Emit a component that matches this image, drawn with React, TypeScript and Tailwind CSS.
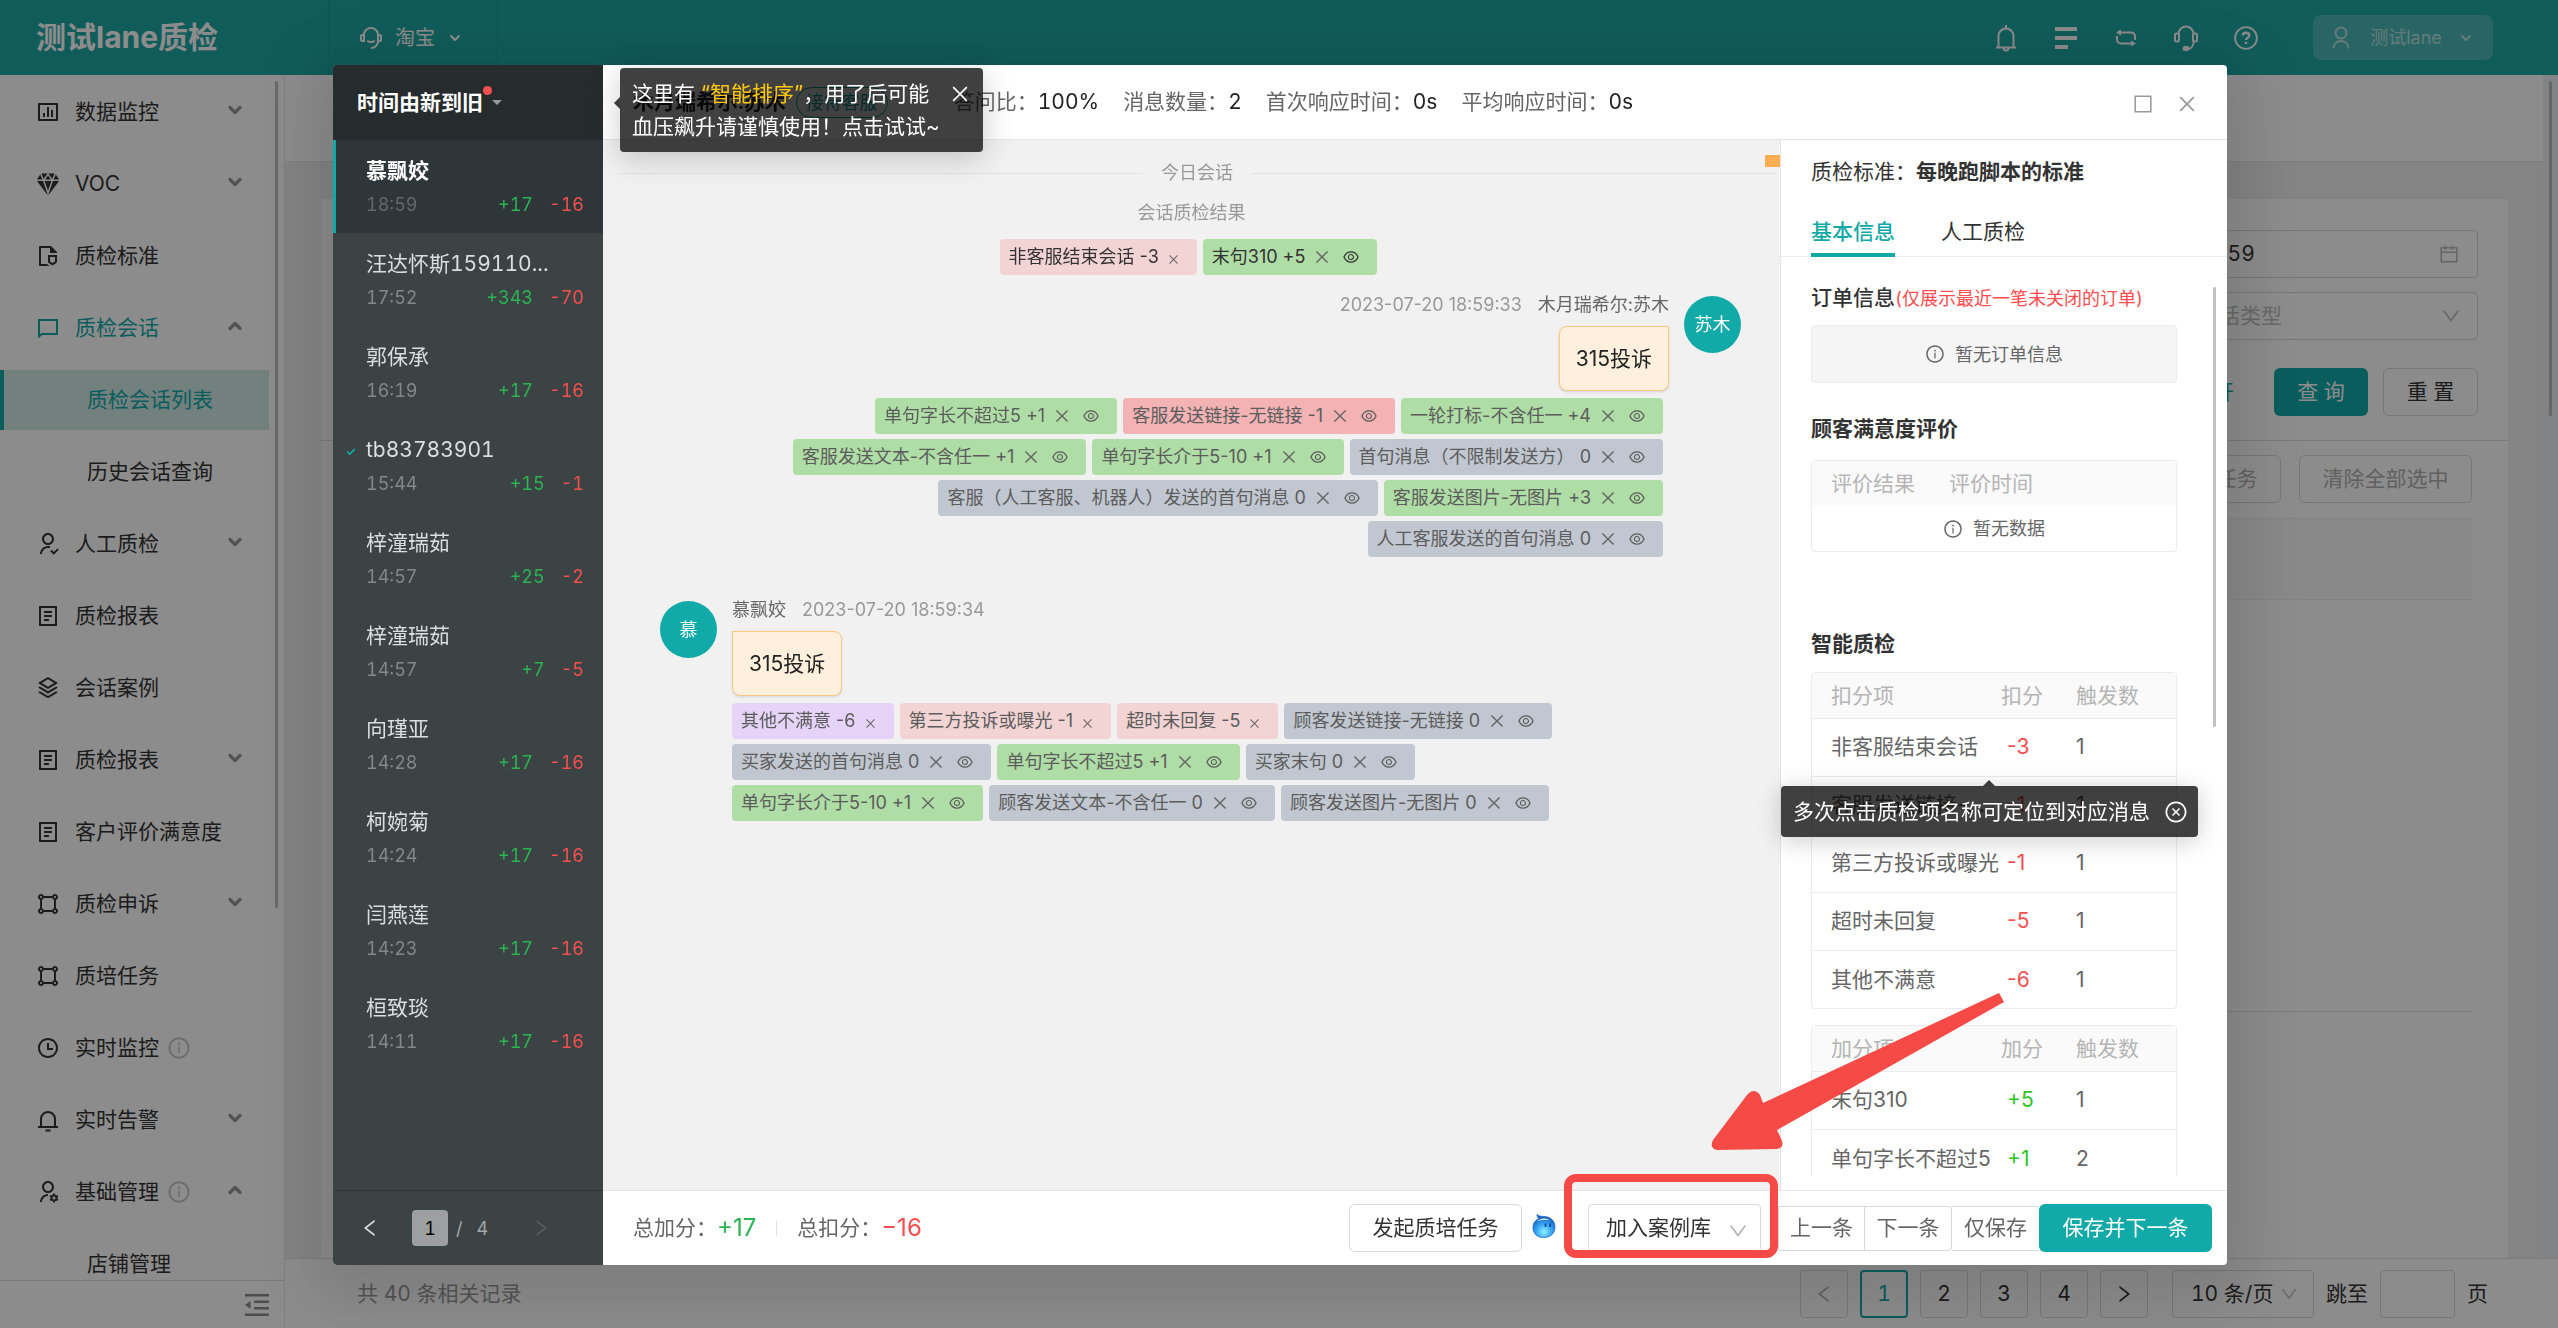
import { useState } from "react";
import type { ReactNode } from "react";
import {
  AiOutlineBorder,
  AiOutlineCalendar,
  AiOutlineClose,
  AiOutlineCloseCircle,
  AiOutlineDown,
  AiOutlineEye,
  AiOutlineInfoCircle,
  AiOutlineLeft,
  AiOutlineRight,
} from "react-icons/ai";
import { IoDiamond } from "react-icons/io5";
import {
  RiBarChartBoxLine,
  RiCustomerService2Line,
  RiFileShield2Line,
  RiShapeLine,
  RiStackLine,
  RiTimeLine,
  RiUserFollowLine,
  RiUserSettingsLine,
} from "react-icons/ri";
import { Check, ChevronDown, ChevronUp } from "lucide-react";

type MenuItem = {
  label: string;
  icon?: ReactNode;
  arrow?: "up" | "down";
  info?: boolean;
  open?: boolean;
  active?: boolean;
};

type Session = {
  name: string;
  time: string;
  plus: string;
  minus: string;
  checked?: boolean;
};

type TagTone = "green" | "pink" | "red" | "gray" | "purple";
type TagData = { text: string; tone: TagTone; simple?: boolean };

/* ---------- drawn icons ---------- */

const MessageIcon = () => (
  <svg viewBox="0 0 24 24" className="size-6" fill="currentColor">
    <path d="M6.4 19 2 22.5V3h20v16H6.4Zm-.7-2H20V5H4v13.4L5.700 17Z" />
  </svg>
);

const ReportIcon = () => (
  <svg viewBox="0 0 24 24" className="size-6" fill="none" stroke="currentColor" strokeWidth="2">
    <path d="M4 3h16v18H4zM8 8h8M8 12h8M8 16h5" />
  </svg>
);

const BellIcon = () => (
  <svg viewBox="0 0 24 24" className="size-6" fill="none" stroke="currentColor" strokeWidth="2">
    <path d="M5 19v-8a7 7 0 0 1 14 0v8M2 19h20M9.500 22.500h5" />
  </svg>
);

const TopBellIcon = () => (
  <svg viewBox="0 0 24 28" className="h-7 w-6" fill="none" stroke="currentColor" strokeWidth="2">
    <path d="M12 1v3M4.500 23V12a7.500 7.500 0 0 1 15 0v11M2 23.500h20M9.500 24a2.500 2.500 0 0 0 5 0" />
  </svg>
);

const TopListIcon = () => (
  <svg viewBox="0 0 22 22" className="size-[22px]" fill="currentColor">
    <path d="M0 0h22v4H0zM0 9h22v4H0zM0 18h13v4H0z" />
  </svg>
);

const TopSwapIcon = () => (
  <svg viewBox="0 0 22 18" className="h-[18px] w-[22px]" fill="none" stroke="currentColor" strokeWidth="2">
    <path d="M4 3.500h12a4 4 0 0 1 4 4V11M18 14.500H6a4 4 0 0 1-4-4V7" />
    <path d="M1 3.500 6 .500v6zM21 14.500l-5-3v6z" fill="currentColor" stroke="none" />
  </svg>
);

const TopHeadsetIcon = () => (
  <svg viewBox="0 0 24 26" className="h-[26px] w-6" fill="none" stroke="currentColor" strokeWidth="2">
    <path d="M4.500 9a7.500 7.500 0 0 1 15 0M19.500 17c0 4-2.500 7-6.500 7" />
    <rect x="1" y="8.500" width="4" height="8" rx="1.500" />
    <rect x="19" y="8.500" width="4" height="8" rx="1.500" />
    <rect x="9.500" y="22" width="5" height="3" rx="1.500" fill="currentColor" />
  </svg>
);

const TopHelpIcon = () => (
  <svg viewBox="0 0 26 26" className="size-[26px]" fill="none" stroke="currentColor">
    <circle cx="13" cy="13" r="11.800" strokeWidth="2" />
    <path d="M9.500 10.300c0-4 7-4 7 0 0 2.300-3.500 2.400-3.500 5" strokeWidth="2.500" />
    <path d="M13 17v2.500" strokeWidth="2.800" />
  </svg>
);

const TopUserIcon = () => (
  <svg viewBox="0 0 18 24" className="h-6 w-[18px]" fill="none" stroke="currentColor" strokeWidth="2">
    <circle cx="9" cy="7" r="5.500" />
    <path d="M1.500 22.500c0-10 15-10 15 0" />
  </svg>
);

const CollapseIcon = () => (
  <svg viewBox="0 0 24 22" className="h-[22px] w-6" fill="currentColor">
    <path d="M0 0h24v2.500H0zM9 6.500h15V9H9zM9 13h15v2.500H9zM0 19.500h24V22H0zM0 11l5.500-4v8z" />
  </svg>
);

const DropletFace = () => (
  <svg viewBox="0 0 24 24" className="size-6 shrink-0">
    <defs>
      <radialGradient id="drop" cx="50%" cy="75%" r="65%">
        <stop offset="0" stopColor="#8df0ff" />
        <stop offset=".55" stopColor="#35a4f5" />
        <stop offset="1" stopColor="#1560c4" />
      </radialGradient>
    </defs>
    <path d="M5 .500c1.500 1.500 4 2 7 2 6 0 11 4 11 10.500s-4.500 10.500-11.500 10.500S1 19 1 13.500C1 9 3.500 6 7 4.500 5.500 3.500 4.800 2 5 .500Z" fill="url(#drop)" stroke="#2767b8" strokeWidth=".8" />
    <path d="M5 7.500C8 3.800 15 3.500 18 6.500c-5-.800-9-.500-13 1Z" fill="#d5e8fb" />
    <path d="M13.500 9.500v3.500M18 9.500v3.500" stroke="#0d3f94" strokeWidth="1.600" />
  </svg>
);

/* ---------- data ---------- */

const menu: MenuItem[] = [
  { label: "数据监控", icon: <RiBarChartBoxLine className="size-6" />, arrow: "down" },
  { label: "VOC", icon: <IoDiamond className="size-6" />, arrow: "down" },
  { label: "质检标准", icon: <RiFileShield2Line className="size-6" /> },
  { label: "质检会话", icon: <MessageIcon />, arrow: "up", open: true },
  { label: "质检会话列表", active: true },
  { label: "历史会话查询" },
  { label: "人工质检", icon: <RiUserFollowLine className="size-6" />, arrow: "down" },
  { label: "质检报表", icon: <ReportIcon /> },
  { label: "会话案例", icon: <RiStackLine className="size-6" /> },
  { label: "质检报表", icon: <ReportIcon />, arrow: "down" },
  { label: "客户评价满意度", icon: <ReportIcon /> },
  { label: "质检申诉", icon: <RiShapeLine className="size-6" />, arrow: "down" },
  { label: "质培任务", icon: <RiShapeLine className="size-6" /> },
  { label: "实时监控", icon: <RiTimeLine className="size-6" />, info: true },
  { label: "实时告警", icon: <BellIcon />, arrow: "down" },
  { label: "基础管理", icon: <RiUserSettingsLine className="size-6" />, arrow: "up", info: true },
  { label: "店铺管理" },
];

const sessions: Session[] = [
  { name: "慕飘姣", time: "18:59", plus: "+17", minus: "-16" },
  { name: "汪达怀斯159110...", time: "17:52", plus: "+343", minus: "-70" },
  { name: "郭保承", time: "16:19", plus: "+17", minus: "-16" },
  { name: "tb83783901", time: "15:44", plus: "+15", minus: "-1", checked: true },
  { name: "梓潼瑞茹", time: "14:57", plus: "+25", minus: "-2" },
  { name: "梓潼瑞茹", time: "14:57", plus: "+7", minus: "-5" },
  { name: "向瑾亚", time: "14:28", plus: "+17", minus: "-16" },
  { name: "柯婉菊", time: "14:24", plus: "+17", minus: "-16" },
  { name: "闫燕莲", time: "14:23", plus: "+17", minus: "-16" },
  { name: "桓致琰", time: "14:11", plus: "+17", minus: "-16" },
];

const agentTags: TagData[][] = [
  [
    { text: "单句字长不超过5 +1", tone: "green" },
    { text: "客服发送链接-无链接 -1", tone: "red" },
    { text: "一轮打标-不含任一 +4", tone: "green" },
  ],
  [
    { text: "客服发送文本-不含任一 +1", tone: "green" },
    { text: "单句字长介于5-10 +1", tone: "green" },
    { text: "首句消息（不限制发送方） 0", tone: "gray" },
  ],
  [
    { text: "客服（人工客服、机器人）发送的首句消息 0", tone: "gray" },
    { text: "客服发送图片-无图片 +3", tone: "green" },
  ],
  [{ text: "人工客服发送的首句消息 0", tone: "gray" }],
];

const buyerTags: TagData[][] = [
  [
    { text: "其他不满意 -6", tone: "purple", simple: true },
    { text: "第三方投诉或曝光 -1", tone: "pink", simple: true },
    { text: "超时未回复 -5", tone: "pink", simple: true },
    { text: "顾客发送链接-无链接 0", tone: "gray" },
  ],
  [
    { text: "买家发送的首句消息 0", tone: "gray" },
    { text: "单句字长不超过5 +1", tone: "green" },
    { text: "买家末句 0", tone: "gray" },
  ],
  [
    { text: "单句字长介于5-10 +1", tone: "green" },
    { text: "顾客发送文本-不含任一 0", tone: "gray" },
    { text: "顾客发送图片-无图片 0", tone: "gray" },
  ],
];

const minusRows = [
  ["非客服结束会话", "-3", "1"],
  ["客服发送链接-...", "-1", "1"],
  ["第三方投诉或曝光", "-1", "1"],
  ["超时未回复", "-5", "1"],
  ["其他不满意", "-6", "1"],
];

const plusRows = [
  ["末句310", "+5", "1"],
  ["单句字长不超过5", "+1", "2"],
];

const toneClass: Record<TagTone, string> = {
  green: "bg-[#afdda6]",
  pink: "bg-[#f3d4d4]",
  red: "bg-[#f3b3b5]",
  gray: "bg-[#c1c7d0]",
  purple: "bg-[#e5d4f8]",
};

/* ---------- page behind the dialog ---------- */

function TopBar() {
  return (
    <header className="flex h-[75px] shrink-0 items-center bg-[#1ea8a4] text-white">
      <div className="flex h-full w-[328px] items-center pl-9 text-[30px] font-bold">测试lane质检</div>
      <button className="flex h-full w-[170px] items-center justify-center gap-3 border-x border-[#1a9f9b] pr-1 text-[20px]">
        <RiCustomerService2Line className="size-6" />
        淘宝
        <ChevronDown className="size-4" strokeWidth={3} />
      </button>
      <div className="ml-auto flex items-center gap-9 pr-[65px]">
        <button aria-label="通知" className="flex w-6 justify-center"><TopBellIcon /></button>
        <button aria-label="列表" className="flex w-6 justify-center"><TopListIcon /></button>
        <button aria-label="切换" className="flex w-6 justify-center"><TopSwapIcon /></button>
        <button aria-label="客服" className="flex w-6 justify-center"><TopHeadsetIcon /></button>
        <button aria-label="帮助" className="flex w-6 justify-center"><TopHelpIcon /></button>
        <button className="ml-[19px] flex h-[45px] w-[180px] items-center justify-center rounded-lg bg-white/20 text-[18px] text-white/60">
          <TopUserIcon />
          <span className="mr-4 ml-5">测试lane</span>
          <ChevronDown className="size-4" strokeWidth={3} />
        </button>
      </div>
    </header>
  );
}

function SideNav() {
  return (
    <aside className="flex w-[285px] shrink-0 flex-col border-r border-[#e8e8e8] bg-white">
      <div className="flex min-h-0 flex-1">
        <nav className="flex min-w-0 flex-1 flex-col overflow-hidden pt-px">
          {menu.map((m, i) => (
            <a
              key={i}
              href="#"
              className={`my-1.5 flex h-[60px] shrink-0 items-center text-[21px] ${
                m.active
                  ? "border-l-4 border-[#12aaa8] bg-[#cfe9e6] pl-[83px] text-[#12aaa8]"
                  : m.icon
                    ? "pl-9"
                    : "pl-[87px]"
              } ${m.open ? "text-[#12aaa8]" : m.active ? "" : "text-[#333]"}`}
            >
              {m.icon && <span className="mr-[15px] flex">{m.icon}</span>}
              {m.label}
              {m.info && <AiOutlineInfoCircle className="ml-2 size-6 text-[#c4c4c4]" />}
              {m.arrow === "down" && <ChevronDown className="mr-6 mb-1 ml-auto size-5 text-[#999]" strokeWidth={4} />}
              {m.arrow === "up" && <ChevronUp className="mr-6 mb-1 ml-auto size-5 text-[#999]" strokeWidth={4} />}
            </a>
          ))}
        </nav>
        <div className="w-[15px] pt-1.5">
          <div className="mx-auto h-[827px] w-[3px] rounded bg-[#c1c1c1]" />
        </div>
      </div>
      <div className="flex h-12 shrink-0 items-center justify-end border-t border-[#e0e0e0] pr-[15px] text-[#8c8c8c]">
        <button aria-label="收起菜单"><CollapseIcon /></button>
      </div>
    </aside>
  );
}

function MainArea() {
  return (
    <main className="flex min-w-0 flex-1 flex-col bg-[#f0f0f0] text-[21px] text-[#333]">
      <div className="flex min-h-0 flex-1">
        <div className="flex min-w-0 flex-1 flex-col">
          <div className="h-[87px] shrink-0 border-b border-[#e8e8e8] bg-white" />
          <div className="mt-[37px] mr-[35px] ml-9 flex flex-1 flex-col bg-white">
            <div className="flex flex-col items-end border-b border-[#e0e0e0] pt-[31px] pr-[30px] pb-6">
              <label className="flex h-12 w-[476px] items-center rounded-sm border border-[#d9d9d9] px-[17px]">
                <input aria-label="结束时间" defaultValue="2023-07-20 23:59:59" className="min-w-0 flex-1" />
                <AiOutlineCalendar className="size-[22px] text-[#bbb]" />
              </label>
              <div className="mt-3.5 flex h-12 w-[359px] items-center rounded-sm border border-[#d9d9d9] px-[15px] text-[#bfbfbf]">
                <select aria-label="会话类型" className="min-w-0 flex-1 appearance-none">
                  <option>请选择会话类型</option>
                </select>
                <AiOutlineDown className="size-[22px]" />
              </div>
              <div className="mt-7 flex items-center">
                <button className="mr-10 text-[#12aaa8]">展开</button>
                <button className="h-12 w-[94px] rounded-md bg-[#12aaa8] text-white">查 询</button>
                <button className="ml-[15px] h-12 w-[95px] rounded-md border border-[#d9d9d9]">重 置</button>
              </div>
            </div>
            <div className="flex flex-1 flex-col px-9">
              <div className="mt-3.5 flex justify-end gap-[18px] text-[#b0b0b0]">
                <button className="h-12 w-[173px] rounded-md border border-[#d9d9d9]">发起质培任务</button>
                <button className="h-12 w-[173px] rounded-md border border-[#d9d9d9]">清除全部选中</button>
              </div>
              <div className="mt-[15px] h-[82px] border-y border-[#eee] bg-[#fafafa]" />
              <div className="h-[412px] border-b border-[#e4e4e4]" />
            </div>
          </div>
        </div>
        <div className="w-[15px] bg-[#eceef2] pt-1.5">
          <div className="mx-auto h-[335px] w-[3px] rounded bg-[#bbb]" />
        </div>
      </div>
      <div className="flex h-[70px] shrink-0 items-center gap-3 border-t border-[#e0e0e0] bg-white pr-[70px] pl-[72px]">
        <span className="mr-auto text-[#999]">共 40 条相关记录</span>
        <button aria-label="上一页" className="flex size-12 items-center justify-center rounded-sm border border-[#d9d9d9] text-[#b0b0b0]">
          <AiOutlineLeft className="size-[22px]" />
        </button>
        <button className="size-12 rounded-sm border-2 border-[#12aaa8] text-[#12aaa8]">1</button>
        <button className="size-12 rounded-sm border border-[#d9d9d9]">2</button>
        <button className="size-12 rounded-sm border border-[#d9d9d9]">3</button>
        <button className="size-12 rounded-sm border border-[#d9d9d9]">4</button>
        <button aria-label="下一页" className="flex size-12 items-center justify-center rounded-sm border border-[#d9d9d9]">
          <AiOutlineRight className="size-[22px]" />
        </button>
        <div className="ml-3 flex h-12 w-[142px] items-center rounded-sm border border-[#d9d9d9] pr-3.5 pl-[18px]">
          <select aria-label="每页条数" className="min-w-0 flex-1 appearance-none">
            <option>10 条/页</option>
          </select>
          <AiOutlineDown className="size-5 text-[#bfbfbf]" />
        </div>
        <label htmlFor="jump">跳至</label>
        <input id="jump" className="h-12 w-[75px] rounded-sm border border-[#d9d9d9]" />
        <span>页</span>
      </div>
    </main>
  );
}

/* ---------- dialog parts ---------- */

function SessionList() {
  const [current, setCurrent] = useState(0);

  return (
    <section className="flex w-[270px] shrink-0 flex-col rounded-l-sm bg-[#3b4344]">
      <button className="flex h-[75px] shrink-0 items-center rounded-tl-sm bg-[#262b2e] pl-6 text-[21px] font-semibold text-white">
        时间由新到旧
        <span className="mb-6 size-[9px] rounded-full bg-[#f5504e]" />
        <span className="border-x-[5px] border-t-[5px] border-x-transparent border-t-[#999]" />
      </button>
      <div className="min-h-0 flex-1 overflow-hidden">
        {sessions.map((s, i) => (
          <button
            key={i}
            onClick={() => setCurrent(i)}
            className={`flex h-[93px] w-full border-l-[3px] text-left ${
              i === current ? "border-[#12aaa8] bg-[#2f3639]" : "border-transparent"
            }`}
          >
            <span className="flex w-[30px] shrink-0 justify-center pt-7">
              {s.checked && <Check className="size-2.5 text-[#12aaa8]" strokeWidth={4} />}
            </span>
            <span className="min-w-0 flex-1 pt-[15px] pr-[19px]">
              <span
                className={`block text-[21px] leading-8 ${
                  i === current ? "font-semibold text-white" : "text-[#dcdddd]"
                }`}
              >
                {s.name}
              </span>
              <span className="flex gap-4 text-[18px] leading-9">
                <span className={`mr-auto ${i === current ? "text-[#63686a]" : "text-[#838889]"}`}>{s.time}</span>
                <span className="text-[#2cb353]">{s.plus}</span>
                <span className="text-[#f5504e]">{s.minus}</span>
              </span>
            </span>
          </button>
        ))}
      </div>
      <div className="flex h-[75px] shrink-0 items-center border-t border-[#2f3639] pl-[26px] text-[18px] text-[#a3a8a9]">
        <button aria-label="上一页" className="text-[#dcdddd]"><AiOutlineLeft className="size-[22px]" /></button>
        <input aria-label="页码" defaultValue="1" className="mr-2 ml-[31px] size-9 rounded-sm bg-[#9d9fa1] text-center text-black" />
        /
        <span className="ml-3.5">4</span>
        <button aria-label="下一页" className="ml-[42px] text-[#555d5e]"><AiOutlineRight className="size-[22px]" /></button>
      </div>
    </section>
  );
}

function Tag({ tag, dark }: { tag: TagData; dark?: boolean }) {
  return (
    <span
      className={`flex h-9 items-center rounded-sm pl-[9px] text-[18px] whitespace-nowrap ${toneClass[tag.tone]} ${
        dark ? "text-[#333]" : "text-[#5c5c5c]"
      } pr-[17px]`}
    >
      {tag.text}
      {tag.simple ? (
        <button aria-label="删除" className="ml-2 pt-1">
          <AiOutlineClose className="size-[13px] text-[#666]" />
        </button>
      ) : (
        <>
          <button aria-label="删除" className="ml-2">
            <AiOutlineClose className="size-[18px] text-[#666]" />
          </button>
          <button aria-label="查看" className="ml-[11px]">
            <AiOutlineEye className="size-[18px]" />
          </button>
        </>
      )}
    </span>
  );
}

function TagRows({ rows, right }: { rows: TagData[][]; right?: boolean }) {
  return (
    <div className="mt-[7px] flex flex-col gap-[5px]">
      {rows.map((row, i) => (
        <div key={i} className={`flex gap-1.5 ${right ? "justify-end pr-1.5" : ""}`}>
          {row.map((t) => (
            <Tag key={t.text} tag={t} />
          ))}
        </div>
      ))}
    </div>
  );
}

function Chat() {
  return (
    <section className="relative min-w-0 flex-1 overflow-hidden bg-[#f1f1f1] text-[18px] leading-7 proportional-nums">
      <span className="absolute top-[15px] right-0 h-3 w-[15px] bg-[#ffad52]" />
      <div className="mt-[19px] mr-1 ml-[15px] flex items-center gap-[18px] text-[#999]">
        <span className="h-px flex-1 bg-[#e4e4e4]" />
        今日会话
        <span className="h-px flex-1 bg-[#e4e4e4]" />
      </div>
      <p className="mt-3 text-center text-[#999]">会话质检结果</p>
      <div className="mt-3 flex justify-center gap-1.5 pr-1.5">
        <Tag tag={{ text: "非客服结束会话 -3", tone: "pink", simple: true }} dark />
        <Tag tag={{ text: "末句310 +5", tone: "green" }} dark />
      </div>

      <div className="mt-4 flex justify-end gap-[15px] pr-[39px]">
        <div className="flex flex-col items-end">
          <div className="flex gap-4">
            <span className="text-[#999]">2023-07-20 18:59:33</span>
            <span className="text-[#666]">木月瑞希尔:苏木</span>
          </div>
          <div className="mt-[7px] flex h-[65px] items-center rounded-lg rounded-tr-none border border-[#ffc680] bg-[#fff0dd] px-4 text-[21px] text-[#222] shadow-sm">
            315投诉
          </div>
          <TagRows rows={agentTags} right />
        </div>
        <span className="mt-[5px] flex size-[57px] shrink-0 items-center justify-center rounded-full bg-[#12aaa8] text-white">
          苏木
        </span>
      </div>

      <div className="mt-[39px] flex gap-[15px] pl-[57px]">
        <span className="mt-[5px] flex size-[57px] shrink-0 items-center justify-center rounded-full bg-[#12aaa8] text-white">
          慕
        </span>
        <div className="flex flex-col items-start">
          <div className="flex gap-4">
            <span className="text-[#666]">慕飘姣</span>
            <span className="text-[#999]">2023-07-20 18:59:34</span>
          </div>
          <div className="mt-[7px] flex h-[65px] items-center rounded-lg rounded-tl-none border border-[#ffc680] bg-[#fff0dd] px-4 text-[21px] text-[#222] shadow-sm">
            315投诉
          </div>
          <TagRows rows={buyerTags} />
        </div>
      </div>
    </section>
  );
}

function ScoreTable({ kind, rows }: { kind: "minus" | "plus"; rows: string[][] }) {
  const word = kind === "minus" ? "扣分" : "加分";
  return (
    <div className="rounded-sm border border-[#ebebeb]">
      <table className="w-full table-fixed text-left text-[21px] text-[#666] proportional-nums">
        <thead>
          <tr className="h-[45px] bg-[#fafafa] text-[#b5b5b5]">
            <th className="w-[189px] pl-[19px] font-normal">{word}项</th>
            <th className="w-[75px] font-normal">{word}</th>
            <th className="font-normal">触发数</th>
          </tr>
        </thead>
        <tbody>
          {rows.map((r) => (
            <tr key={r[0]} className="h-[58px] border-t border-[#ebebeb]">
              <td className="truncate pl-[19px]">{r[0]}</td>
              <td className={`pl-1.5 ${kind === "minus" ? "text-[#f5504e]" : "text-[#2fc31f]"}`}>{r[1]}</td>
              <td>{r[2]}</td>
            </tr>
          ))}
        </tbody>
      </table>
    </div>
  );
}

function InfoPanel() {
  const [tip, setTip] = useState(true);

  return (
    <section className="relative flex w-[447px] shrink-0 flex-col border-l border-[#e4e4e4] bg-white pb-3.5 text-[21px] text-[#333]">
      <div className="flex h-16 shrink-0 items-center pl-[30px]">
        质检标准：<b className="font-semibold">每晚跑脚本的标准</b>
      </div>
      <div className="flex h-[53px] shrink-0 gap-[46px] border-b border-[#ebebeb] pl-[30px]">
        <button className="-mb-px border-b-4 border-[#12aaa8] pt-1.5 font-medium text-[#12aaa8]">基本信息</button>
        <button className="-mb-px border-b-4 border-transparent pt-1.5">人工质检</button>
      </div>
      <div className="flex min-h-0 flex-1 overflow-hidden">
        <div className="min-w-0 flex-1 pt-[25px] pl-[30px]">
          <h3 className="leading-8 font-medium whitespace-nowrap">
            订单信息<span className="text-[18px] font-normal text-[#ff4d4f]">(仅展示最近一笔未关闭的订单)</span>
          </h3>
          <div className="mt-2.5 flex h-[58px] items-center justify-center gap-2.5 rounded-sm border border-[#ebebeb] bg-[#f5f5f5] text-[18px] text-[#666]">
            <AiOutlineInfoCircle className="size-5" />
            暂无订单信息
          </div>
          <h3 className="mt-[30px] leading-8 font-semibold">顾客满意度评价</h3>
          <div className="mt-[15px] rounded-sm border border-[#ebebeb]">
            <table className="w-full table-fixed text-left">
              <thead>
                <tr className="h-[45px] bg-[#fafafa] text-[#b5b5b5]">
                  <th className="w-[137px] pl-[19px] font-normal">评价结果</th>
                  <th className="font-normal">评价时间</th>
                </tr>
              </thead>
              <tbody>
                <tr className="h-[45px] text-[18px] text-[#666]">
                  <td colSpan={2}>
                    <span className="flex items-center justify-center gap-2.5">
                      <AiOutlineInfoCircle className="size-5" />
                      暂无数据
                    </span>
                  </td>
                </tr>
              </tbody>
            </table>
          </div>
          <h3 className="mt-[76px] mb-3 leading-8 font-semibold">智能质检</h3>
          <ScoreTable kind="minus" rows={minusRows} />
          <div className="h-4" />
          <ScoreTable kind="plus" rows={plusRows} />
        </div>
        <div className="w-[50px] shrink-0 pt-[30px] pl-9">
          <div className="h-[440px] w-[3px] rounded bg-[#c1c1c1]" />
        </div>
      </div>
      {tip && (
        <div className="absolute top-[646px] left-0 flex h-[51px] items-center gap-3.5 rounded-sm bg-black/75 pr-2.5 pl-3 whitespace-nowrap text-white shadow-[0_4px_24px_rgba(0,0,0,0.2)]">
          <span className="absolute -top-1.5 left-[202px] border-x-[6px] border-b-[6px] border-x-transparent border-b-black/75" />
          多次点击质检项名称可定位到对应消息
          <button aria-label="关闭提示" onClick={() => setTip(false)}>
            <AiOutlineCloseCircle className="size-6" />
          </button>
        </div>
      )}
    </section>
  );
}

function DialogHeader() {
  const [tip, setTip] = useState(true);

  return (
    <header className="relative flex h-[75px] shrink-0 items-center gap-6 border-b border-[#e4e4e4] pr-[29px] pl-[30px] text-[21px] text-[#666]">
      <b className="font-semibold text-[#222]">木月瑞希尔:苏木</b>
      <span className="-ml-3.5 flex h-[31px] w-[92px] items-center justify-center rounded-full border border-[#12aaa8] text-[18px] text-[#12aaa8]">
        接待客服
      </span>
      <span className="ml-[42px]">答问比：<span className="text-[#222]">100%</span></span>
      <span>消息数量：<span className="text-[#222]">2</span></span>
      <span>首次响应时间：<span className="text-[#222]">0s</span></span>
      <span>平均响应时间：<span className="text-[#222]">0s</span></span>
      <button aria-label="最大化" className="mt-1 ml-auto text-[#999]"><AiOutlineBorder className="size-[22px]" /></button>
      <button aria-label="关闭" className="mt-1 -ml-0.5 text-[#999]"><AiOutlineClose className="size-[22px]" /></button>
      {tip && (
        <div className="absolute top-[3px] left-[17px] z-10 flex h-[84px] w-[363px] items-start rounded-sm bg-black/75 px-3 py-[9px] leading-[33px] text-white shadow-[0_6px_32px_rgba(0,0,0,0.2)]">
          <span className="absolute top-[29px] -left-1.5 border-y-[6px] border-r-[6px] border-y-transparent border-r-black/75" />
          <p className="flex-1 whitespace-nowrap">
            这里有 <span className="text-[#ffc60a]">“智能排序”</span>，用了后可能
            <br />
            血压飙升请谨慎使用！点击试试~
          </p>
          <button aria-label="关闭提示" className="mt-1.5" onClick={() => setTip(false)}>
            <AiOutlineClose className="size-[22px]" />
          </button>
        </div>
      )}
    </header>
  );
}

function DialogFooter() {
  return (
    <footer className="flex h-[75px] shrink-0 items-center border-t border-[#e4e4e4] pr-[15px] pl-[30px] text-[21px] text-[#666]">
      总加分：<span className="text-[24px] text-[#2cb353] proportional-nums">+17</span>
      <span className="mx-5 h-[15px] w-px bg-[#e0e0e0]" />
      总扣分：<span className="text-[24px] text-[#f5504e] proportional-nums">−16</span>
      <button className="ml-auto h-12 w-[173px] rounded-md border border-[#d9d9d9] text-[#333]">发起质培任务</button>
      <span className="mr-8 mb-1 ml-2.5"><DropletFace /></span>
      <div className="relative mr-[17px] h-12 w-[173px]">
        <select aria-label="加入案例库" className="size-full appearance-none rounded-sm border border-[#d9d9d9] pl-[17px] text-[#333]">
          <option>加入案例库</option>
        </select>
        <AiOutlineDown className="pointer-events-none absolute top-4 right-3 size-[22px] text-[#b5b5b5]" />
        {/* marker frame and arrow over the button */}
        <span className="pointer-events-none absolute -top-[30px] -right-[17px] -bottom-1.5 -left-6 z-10 rounded-xl border-8 border-[#f64a46]" />
        <svg
          viewBox="0 0 294 158"
          className="pointer-events-none absolute bottom-[101px] left-[123px] z-10 h-[158px] w-[294px]"
          fill="#f64a46"
        >
          <path d="M288 0 293 9 66 137 71 148Q73 155 66 156L6 157Q-2 155 2 147L36 102Q43 94 49 102L52 110Z" />
        </svg>
      </div>
      <button className="h-[45px] w-[87px] border border-[#d9d9d9]">上一条</button>
      <button className="h-[45px] w-[87px] rounded-r-sm border-y border-r border-[#d9d9d9]">下一条</button>
      <button className="h-[45px] w-[87px] border-y border-[#d9d9d9]">仅保存</button>
      <button className="h-12 w-[173px] rounded-md bg-[#12aaa8] text-white">保存并下一条</button>
    </footer>
  );
}

export default function App() {
  return (
    <div className="flex h-screen flex-col overflow-hidden font-[Inter,'Noto_Sans_CJK_SC',sans-serif] tabular-nums">
      <TopBar />
      <div className="flex min-h-0 flex-1">
        <SideNav />
        <MainArea />
      </div>

      <div className="fixed inset-0 z-20 flex bg-black/45 pt-[65px] pr-[331px] pb-[63px] pl-[333px]">
        <div
          role="dialog"
          aria-label="会话详情"
          className="flex min-w-0 flex-1 rounded-sm bg-white shadow-[0_12px_64px_24px_rgba(0,0,0,0.12)]"
        >
          <SessionList />
          <div className="flex min-w-0 flex-1 flex-col">
            <DialogHeader />
            <div className="flex min-h-0 flex-1">
              <Chat />
              <InfoPanel />
            </div>
            <DialogFooter />
          </div>
        </div>
      </div>
    </div>
  );
}
